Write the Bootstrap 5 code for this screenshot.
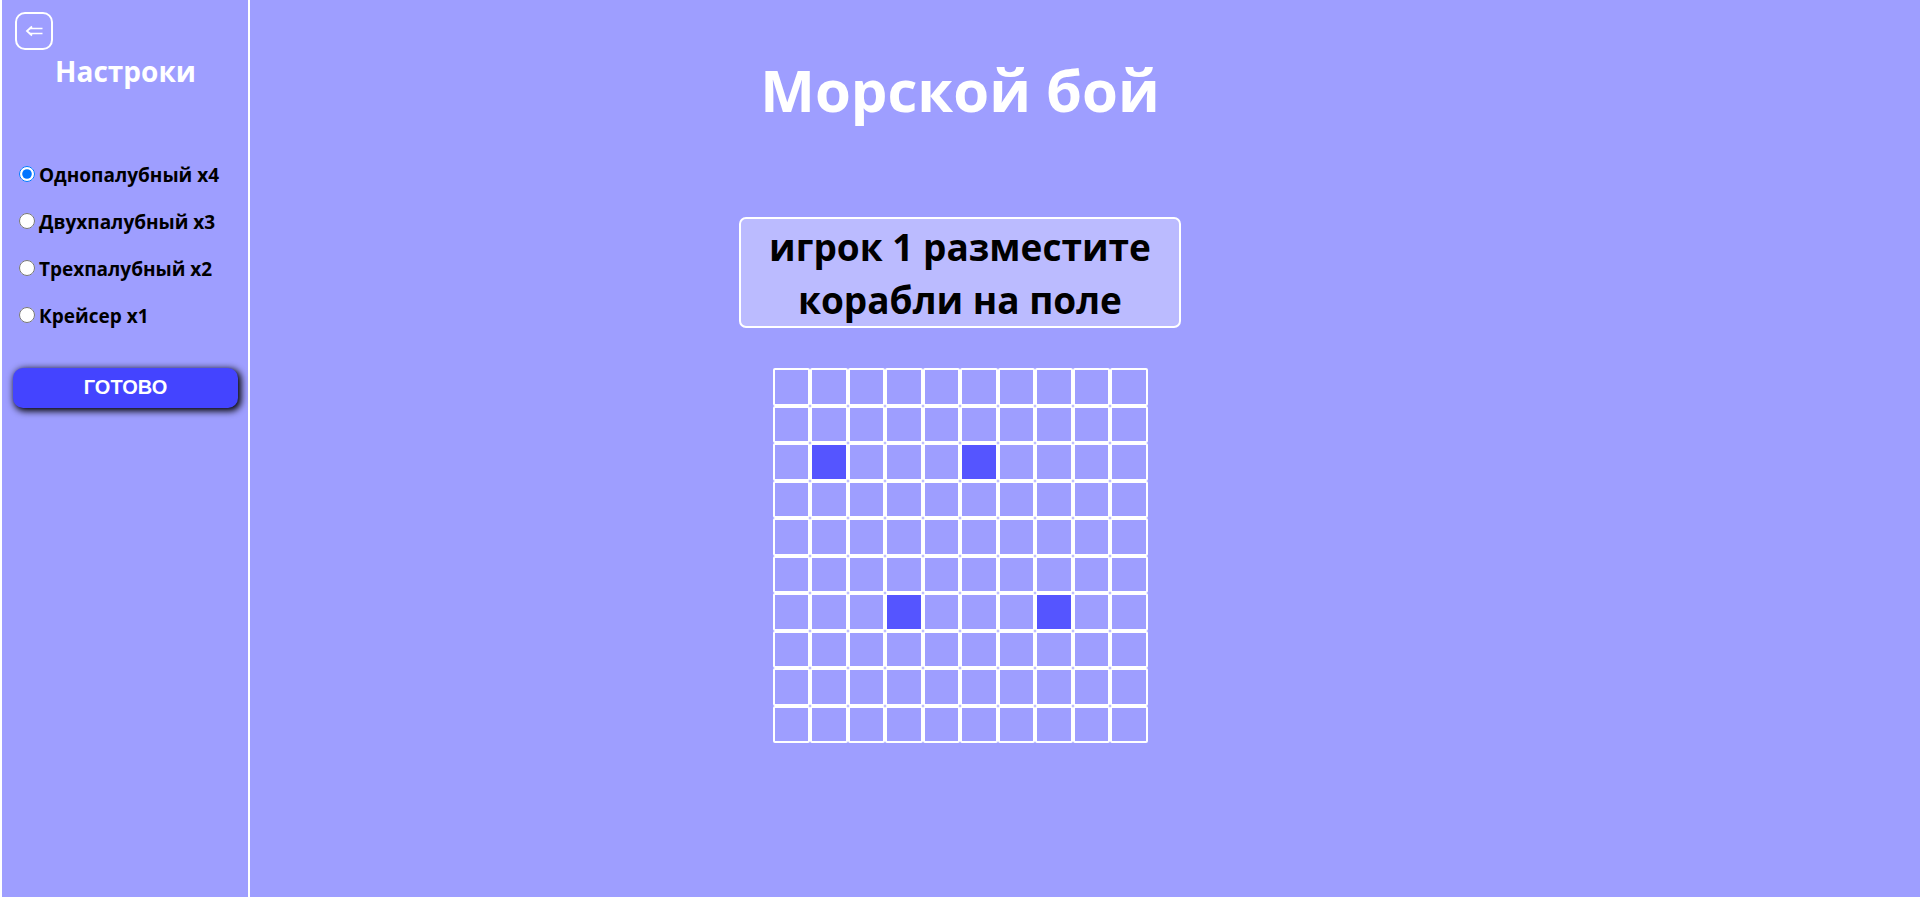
<!DOCTYPE html>
<html lang="ru">
<head>
<meta charset="utf-8">
<meta name="viewport" content="width=device-width, initial-scale=1">
<title>Морской бой</title>
<link href="https://cdn.jsdelivr.net/npm/bootstrap@5.3.0/dist/css/bootstrap.min.css" rel="stylesheet">
<style>
  body { background: #9e9eff; color: #000; font-family: "Open Sans", "Noto Sans", sans-serif; }
  .layout { display: grid; grid-template-columns: 250px minmax(0, 1fr) 250px; }
  .settings { border-left: 2px solid #fff; border-right: 2px solid #fff; padding: 12px 10px 12px 11px; }
  .back-btn { width: 38px; height: 38px; border: 2px solid #fff; border-radius: 10px; margin-left: 2px; }
  .settings h2 { font-size: 28px; font-weight: 700; line-height: 42px; margin-bottom: 70px; }
  .ship { height: 27px; }
  .ship input { width: 16px; height: 16px; margin: 0 4px 3px 6px; }
  .ship label { font-size: 19px; font-weight: 700; line-height: 27px; white-space: nowrap; }
  .ready-btn { height: 40px; margin-top: 38px; border: 0; border-radius: 10px; background: #4444ff; color: #fff;
    font-family: "Liberation Sans", Arial, sans-serif; font-size: 20px; font-weight: 700; line-height: 38px; padding: 0 0 2px;
    box-shadow: 2px 2px 7px 1px #000; }
  .game-title { font-size: 58px; font-weight: 700; line-height: 80px; margin: 50px 0 87px; }
  .status-box { width: 442px; max-width: 100%; border: 2px solid #fff; border-radius: 7px; background: #bbbbff;
    font-size: 37px; font-weight: 700; line-height: 53px; padding: 1px 20px 0; margin-bottom: 40px; }
  .field { display: grid; grid-template: repeat(10, 1fr) / repeat(10, 1fr); width: 375px; height: 375px; }
  .field button { border: 2px solid #fff; border-radius: 2px; background: transparent; padding: 0; }
  .field .deck { background: #5555ff; }
</style>
</head>
<body>
<div class="layout min-vh-100">
  <aside class="settings d-flex flex-column">
    <button type="button" class="back-btn d-flex align-items-center justify-content-center bg-transparent p-0" aria-label="Назад">
      <svg width="18" height="12" viewBox="0 0 18 12" fill="none" stroke="#fff"><path d="M17.5 3.5H4.5M17.5 8.5H4.5" stroke-width="1.3"/><path d="M7 1.5 2 6 7 10.5" stroke-width="1.8"/></svg>
    </button>
    <h2 class="text-white text-center">Настроки</h2>
    <div class="d-flex flex-column" style="gap:20px">
      <div class="ship d-flex align-items-center"><input type="radio" name="ship" id="s1" checked><label for="s1">Однопалубный x4</label></div>
      <div class="ship d-flex align-items-center"><input type="radio" name="ship" id="s2"><label for="s2">Двухпалубный x3</label></div>
      <div class="ship d-flex align-items-center"><input type="radio" name="ship" id="s3"><label for="s3">Трехпалубный x2</label></div>
      <div class="ship d-flex align-items-center"><input type="radio" name="ship" id="s4"><label for="s4">Крейсер x1</label></div>
    </div>
    <button type="button" class="ready-btn">ГОТОВО</button>
  </aside>
  <main class="d-flex flex-column align-items-center">
    <h1 class="game-title text-white text-center">Морской бой</h1>
    <div class="status-box text-center" role="status">игрок 1 разместите корабли на поле</div>
    <div class="field" id="field"></div>
  </main>
</div>
<script src="https://cdn.jsdelivr.net/npm/bootstrap@5.3.0/dist/js/bootstrap.bundle.min.js"></script>
<script>
  const decks = ['2-1', '2-5', '6-3', '6-7'];
  const field = document.getElementById('field');
  for (let row = 0; row < 10; row++) {
    for (let col = 0; col < 10; col++) {
      const cell = document.createElement('button');
      cell.type = 'button';
      cell.setAttribute('aria-label', `${row + 1}:${col + 1}`);
      if (decks.includes(`${row}-${col}`)) cell.className = 'deck';
      field.append(cell);
    }
  }
</script>
</body>
</html>
